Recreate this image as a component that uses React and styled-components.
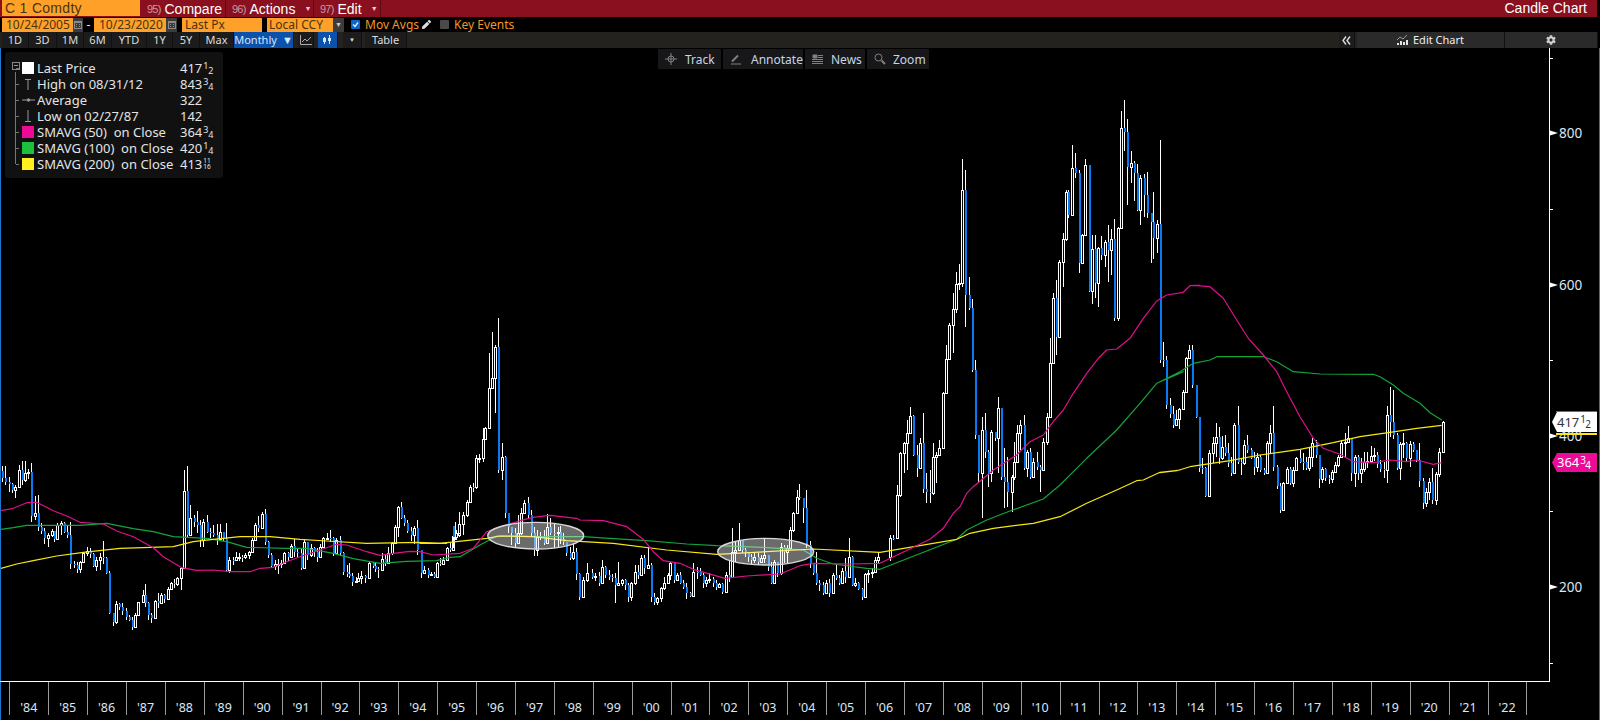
import React from "react";
import styled, { createGlobalStyle } from "styled-components";
import { FaCog, FaPen } from "react-icons/fa";

const Global = createGlobalStyle`
  html, body { margin: 0; padding: 0; background: #000; overflow: hidden; }
  #root { width: 1600px; height: 720px; }
`;

const FONT = `"Noto Sans", "Liberation Sans", sans-serif`;
const MENU_FONT = `"Liberation Sans", Arial, sans-serif`;

const Screen = styled.div`
  width: 1600px; height: 720px; background: #000; display: flex; flex-direction: column;
  font-family: ${FONT}; color: #e6e6e6; overflow: hidden;
`;

/* ---------- top bar ---------- */
const TopBar = styled.div`
  height: 17px; width: 1597px; background: #8a1020; display: flex; align-items: stretch; flex: none;
  font-family: ${MENU_FONT}; font-size: 14px; line-height: 16px;
`;
const Ticker = styled.div`
  width: 138px; margin-left: 2px; height: 16px; background: #ffa028; color: #4a3410;
  padding-left: 3px; box-sizing: border-box; letter-spacing: 0.3px;
`;
const MenuItem = styled.div`
  width: ${p => p.$w}px; box-sizing: border-box; border-right: 1px solid #5c0a15; padding-left: ${p => p.$pad}px;
  display: flex; align-items: center; gap: 4px; color: #fff; white-space: nowrap;
`;
const MenuNum = styled.span`color: #c79aa2; font-size: 11px; letter-spacing: -0.8px;`;
const Caret = styled.span`font-size: 7px; color: #e6d0d4; margin-left: 5px;`;
const Title = styled.div`margin-left: auto; padding-right: 10px; color: #fff;`;

/* ---------- controls ---------- */
const ControlRow = styled.div`
  height: 15px; display: flex; align-items: center; padding-left: 2px; flex: none; font-size: 12px;
`;
const Field = styled.div`
  width: ${p => p.$w}px; height: 14px; margin-left: ${p => p.$ml || 0}px; background: #ffa028; color: #4a3410;
  box-sizing: border-box; padding-left: ${p => p.$pad}px; line-height: 14px; white-space: nowrap; flex: none;
`;
const FieldButton = styled.div`
  width: ${p => p.$w}px; height: 14px; background: #3c3c3c; display: flex; align-items: center; justify-content: center; flex: none;
  color: #ccc; font-size: 7px;
`;
const Dash = styled.span`width: 11px; text-align: center; color: #eee; flex: none; line-height: 12px;`;
const Check = styled.div`
  width: 9px; height: 9px; margin-left: ${p => p.$ml}px; background: ${p => (p.$on ? "#0d66c8" : "#4a4a4a")}; flex: none;
  display: flex; align-items: center; justify-content: center; border-radius: 1px;
`;
const OrangeLabel = styled.span`margin-left: 5px; color: #f0962a; white-space: nowrap; flex: none;`;

/* ---------- range bar ---------- */
const RangeRow = styled.div`
  height: 16px; background: #23221e; display: flex; padding-left: 2px; width: 1598px; box-sizing: border-box; flex: none;
  font-size: 11px; color: #dcdcdc;
`;
const RangeBtn = styled.div`
  width: ${p => p.$w}px; margin-left: ${p => p.$ml || 0}px; background: ${p => (p.$on ? "#0b52ad" : "#1c1c1c")};
  color: ${p => (p.$on ? "#d6e6ff" : "#dcdcdc")}; border-right: 1px solid #111; box-sizing: border-box;
  display: flex; align-items: center; justify-content: center; gap: 5px; line-height: 14px; white-space: nowrap; flex: none;
`;
const EditBtn = styled(RangeBtn)`background: #2a2a2a; color: #eee;`;

/* ---------- chart ---------- */
const ChartArea = styled.div`
  position: relative; flex: 1; box-shadow: inset 1px 0 0 #1a78d0, inset -1px 0 0 #1a78d0;
`;
const ChartSvg = styled.svg`display: block; width: 1600px; height: 672px;`;

const FloatBar = styled.div`
  position: absolute; top: 1px; left: 658px; display: flex; gap: 2px; height: 20px;
`;
const FloatBtn = styled.div`
  width: ${p => p.$w}px; background: #17171a; color: #c4d6e8; font-size: 12px; display: flex; align-items: center;
  gap: ${p => p.$gap}px; padding-left: 7px; box-sizing: border-box;
`;

const Legend = styled.div`
  position: absolute; left: 5px; top: 4px; width: 218px; height: 126px; background: #111112; border-radius: 3px;
  padding: 8px 0 0 17px; box-sizing: border-box; font-size: 13px; color: #e4e4e4;
`;
const TreeLine = styled.div`
  position: absolute; left: 10px; top: 20px; width: 1px; height: 92px; background: #777;
`;
const TreeBox = styled.div`
  position: absolute; left: 7px; top: 10px; width: 6px; height: 6px; border: 1px solid #888;
  &::after { content: ""; position: absolute; left: 1px; top: 2px; width: 4px; height: 1px; background: #999; }
`;
const LegendRow = styled.div`
  height: 16px; display: grid; grid-template-columns: 15px 143px auto; align-items: center; line-height: 16px; white-space: nowrap;
  position: relative;
  &::before { content: ""; position: absolute; left: -6px; top: 8px; width: 3px; height: 1px; background: #777; }
`;
const LegendLabel = styled.span`white-space: pre;`;
const Swatch = styled.div`width: 12px; height: 12px; background: ${p => p.$c};`;
const Value = styled.span`display: inline-flex; align-items: flex-start;`;
const Frac = styled.span`
  display: inline-block; position: relative; flex: none; height: 14px;
  width: ${p => (p.$tiny ? 11 : p.$big ? 12 : 11)}px;
  font-size: ${p => (p.$tiny ? 6.5 : p.$big ? 10 : 9)}px; line-height: ${p => (p.$tiny ? 7 : 9)}px;
  & > i { position: absolute; font-style: normal; }
  & > i:first-child { left: 1px; top: ${p => (p.$big ? 3 : 1)}px; }
  & > i:last-child { left: ${p => (p.$tiny ? 1 : p.$big ? 6 : 6)}px; top: ${p => (p.$tiny ? 7 : p.$big ? 8 : 6)}px; }
`;
const Fraction = ({ n, d, big }) => <Frac $tiny={n.length > 1} $big={big}><i>{n}</i><i>{d}</i></Frac>;

const PriceTag = styled.div`
  position: absolute; left: 1552px; top: ${p => p.$top}px; width: 45px; height: ${p => p.$h}px; background: ${p => p.$bg}; color: ${p => p.$fg};
  clip-path: polygon(5px 0, 100% 0, 100% 100%, 5px 100%, 0 50%);
  font-size: 13px; line-height: ${p => p.$h}px; padding-left: 5px; box-sizing: border-box; display: flex;
`;
const TagStripe = styled.div`
  position: absolute; left: 1556px; top: ${p => p.$top}px; width: 41px; height: ${p => p.$h}px; background: ${p => p.$c};
`;

/* ---------- data: closes read from the chart, grouped by the crop origin ---------- */
const sec = (ox, oy, a) => a.map(([x, c, h, l]) => ({
  x: ox + x / 3, c: oy + c / 3, h: h != null ? oy + h / 3 : null, l: l != null ? oy + l / 3 : null,
}));

const A = [[5,115,78],[16,125,78,135],[26,132,110,155],[36,150,128,160],[46,142,135,175],[57,90,75,143],[66,120,63],[76,98,63,125],[85,95,88],[93,228,70,245],[105,220,168,240],[113,262,165],[122,272,250],[131,293,265],[145,285,278,320],[155,273,268,290],[163,297,272],[172,255,250,297],[183,250,243,285],[192,275,247],[201,285,255],[210,372,245],[222,375,362],[231,387,365,398],[240,365,362,398],[250,340,335,368],[260,332,322],[270,343,325],[279,377,340],[289,360,352,392],[300,350,340,390],[309,353,303],[318,400,350],[327,518,392],[338,547,518],[348,492,482,553],[357,500,490],[366,512,490],[377,530,505],[387,540,525],[396,560,530,570],[406,525,518,558],[415,487,485,528],[428,465,450,488],[435,488,432],[444,525,485],[453,535,520,548],[465,483,480,538],[475,490,460],[484,465,458,490],[493,477,462],[505,447,440,477],[514,430,425,450],[522,432,418],[530,415,410,437],[543,385,382,450],[553,152,90,387],[560,285,78],[570,235,195,280],[581,247,225],[590,255,212,280],[600,300,240,320],[610,245,238,320],[620,275,225],[630,278,265],[640,285,255],[650,297,252],[660,275,252,300],[668,298,280],[677,390,250],[688,360,352,398],[698,360,350,375],[708,352,335,362],[718,350,340,362],[727,352,345],[736,345,338,356],[746,335,332,356],[756,300,295,335],[765,255,250,302],[774,263,228],[785,222,215,265],[794,305,207],[803,345,303],[812,378,340],[825,373,360,390],[834,372,358,402],[843,370,360,385],[853,340,335,372],[864,350,335],[874,318,312,350],[882,335,298],[892,340,325],[903,383,328],[912,305,300,385],[920,345,305],[933,325,312,350],[942,335,320],[950,352,325],[960,320,312,355],[970,295,290,325],[982,293,280,300],[990,295,270],[999,340,290],[1008,300,295,342],[1019,340,288],[1028,395,335],[1040,403,375],[1048,407,368],[1056,427,400],[1068,423,410,428],[1075,415,400,423],[1084,408,392],[1095,415,405],[1108,370,365,415],[1118,378,365],[1125,387,370],[1135,390,380,413],[1147,357,340,385],[1155,370,345],[1165,340,322,372],[1175,310,305,345],[1185,260,255,312],[1195,200,198,290],[1203,235,185],[1212,248,225],[1222,272,240],[1232,285,262],[1242,265,258,312],[1250,330,240],[1262,400,330],[1273,390,378,402],[1283,405,385,415],[1293,403,395,408],[1303,412,395,415],[1312,370,365,410],[1320,372,355],[1330,360,352,372],[1342,325,320,360],[1350,330,310],[1358,288,278,328],[1366,285,245,300],[1376,258,245,290]];

const B = [[158,710,700,745],[168,700,690],[178,672,635,702],[190,645,635,705],[200,607,600,650],[210,560,555,608],[218,560,550],[229,475,465,568],[238,473,462],[248,418,385,485],[256,385,380,420],[268,265,160,388],[277,233,95,268],[286,140,135,340],[294,510,55],[306,472,430,540],[315,640,468],[324,680,645],[334,700,680,735],[344,728,685],[355,700,645,730],[364,640,625,705],[373,610,600,640],[384,645,590],[392,700,630],[402,750,680,768],[412,712,690,768],[421,715,695],[432,730,690],[442,680,642,732],[450,698,655],[462,700,668,745],[473,695,680,740],[480,718,678],[490,725,700],[497,760,725],[509,775,740],[519,757,730,780],[527,822,745],[537,890,820],[550,840,830,892],[560,820,790,845],[575,830,808],[585,828,818],[597,850,815],[607,800,780,850],[615,825,798],[628,830,810],[636,835,822],[645,855,820,910],[655,848,785,855],[667,840,838,858],[675,855,838],[684,890,850],[694,850,845,902],[705,815,795,855],[714,825,795],[723,775,765,825],[732,805,765],[745,795,745,808],[753,890,790],[762,905,880,915],[772,895,892,915],[783,865,860,905],[793,848,830,870],[803,825,820,850],[811,790,785,840],[822,840,785],[831,825,818,842],[840,850,815],[848,860,840],[857,878,850],[870,888,875,892],[880,815,790,892],[890,815,800,838],[899,825,805],[909,850,820],[918,840,830,862],[928,838,820,848],[938,848,830],[948,860,840],[958,852,848,860],[967,875,850],[977,825,815,878],[987,830,780,845],[997,755,685,835],[1006,750,725,785],[1016,720,668,752],[1026,750,720],[1035,760,745],[1044,770,755,785],[1052,780,762,792],[1062,772,760,788],[1075,785,760,795],[1082,775,765,790],[1092,765,715,790],[1103,800,765],[1113,850,785],[1123,785,780,850],[1132,820,785],[1142,740,730,825],[1152,755,735,790],[1162,745,735,790],[1170,690,680,750],[1180,640,635,695],[1190,590,570,640],[1198,595,552],[1208,625,595,670],[1217,735,570],[1230,790,722],[1240,820,795,825],[1248,850,757],[1257,855,840],[1268,878,845],[1278,850,840,878],[1288,878,838],[1298,825,820,870],[1308,835,795,840],[1318,850,825],[1327,812,805,852],[1336,830,775],[1347,770,715,830],[1356,855,768],[1365,850,835,860],[1375,868,845],[1385,890,865],[1395,822,820,892],[1405,818,810,850],[1415,815,805],[1425,780,770,820],[1435,772,755]];

const C = [[90,1195,1185],[100,1195,1185],[112,1065,1035,1198],[120,940,935,1070],[132,910,905,1000],[141,878,840,990],[150,828,800,880],[158,945,825],[170,985,915,1010],[181,910,895,985],[188,1047,820],[199,1055,1000,1090],[209,1060,990,1090],[219,950,910,1065],[228,945,935,1030],[238,925,900,945],[249,760,755,925],[259,658,615,762],[268,555,550,655],[278,508,460,640],[288,432,395,518],[297,430,372],[307,150,58,440],[315,465,90,560],[326,505,410],[336,690,478],[345,885,660],[354,1000,885,1025],[367,870,832,1135],[375,935,820],[384,1000,930,1040],[394,875,870,1025],[404,895,880],[414,803,770,1000],[422,1010,805],[431,1025,925,1105],[440,1055,950,1100],[455,1010,1005,1115],[463,965,905,1020],[472,880,855,965],[481,855,840,930],[491,985,825],[502,935,930,1010],[510,1012,925],[520,965,955,1012],[530,980,935],[540,990,975,1055],[550,905,895,992],[560,830,820,915],[570,670,595,762],[578,475,460,672],[587,590,420,645],[597,365,360,592],[608,298,280,442],[618,155,150,302],[625,225,150],[635,85,15,170],[646,100,38],[656,368,90,398],[667,285,282,368],[676,75,58,280],[686,452,78],[696,328,285,492],[704,430,285,475],[715,325,320,500],[724,345,288],[736,305,300,382],[744,330,255,425],[754,298,268,405],[762,535,238],[774,265,262,542]];

const D = [[364,115,63,400],[372,125,30,182],[381,230,88,345],[393,218,183,280],[402,248,212,332],[410,360,222],[421,265,255,405],[431,315,252,382],[440,368,246],[452,395,372,520],[458,443,306,508],[472,403,390,490]];

const E = [[900,660,0],[908,660,605,682],[918,795,648],[929,822,775],[938,855,798],[948,838,810,858],[958,808,804,868],[969,755,750,810],[978,655,650,755],[987,630,615,655],[996,735,615],[1008,830,735],[1017,985,830]];

const F = [[126,595,565,612],[135,678,590],[148,550,540,680],[158,520,500,580],[167,502,458,560],[176,565,472],[187,530,498,570],[196,550,495],[205,578,520],[213,608,560],[223,465,460,612],[234,575,408],[242,580,565,615],[251,525,510,585],[261,540,495],[272,565,535],[282,590,545,615],[291,560,550,605],[300,600,555],[311,610,595,615],[320,520,512,612],[329,488,465,550],[338,590,408],[350,648,585],[360,720,640],[370,640,635,720],[380,597,590,640],[390,640,590],[400,600,590,650],[409,565,560,602],[420,575,540],[430,575,550,600],[438,595,560],[447,560,535,602],[457,520,505,590],[468,555,510],[476,628,560,655],[487,597,590,640],[495,625,595],[506,628,615,642],[516,605,600,640],[526,585,575,610],[534,562,555,590],[544,520,510,565],[555,515,490,565],[565,505,468,520],[573,610,505,632],[584,560,555,652],[594,608,555,630],[604,598,565,640],[612,575,545,605],[622,572,545,595],[632,558,528,565],[642,555,535],[651,582,545],[661,597,570],[672,600,575,625],[682,435,408,640],[690,455,350,500],[700,495,360],[711,595,490,600],[721,522,515,630],[730,520,490,565],[739,565,515],[750,522,512,590],[760,540,515],[768,570,540],[777,632,520,650],[788,698,625,718],[799,665,655,710],[808,637,625,690],[815,690,595],[829,612,605,705],[838,545,535,620],[848,457,452,545]];

const candles = [
  ...sec(0, 440, A), ...sec(400, 300, B), ...sec(860, 140, C), ...sec(1000, 90, D),
  ...sec(860, 140, E), ...sec(1160, 270, F),
];

const pts = (ox, oy, a) => a.map(([x, y]) => [ox + x / 3, oy + y / 3]);
const toPath = a => a.map(([x, y]) => `${x.toFixed(1)},${y.toFixed(1)}`).join(" ");

const pink = toPath([
  ...pts(0, 440, [[3,212],[40,205],[80,188],[110,187],[160,212],[200,228],[240,247],[310,252],[350,273],[400,290],[460,323],[490,350],[545,383],[590,391],[640,390],[690,395],[750,395],[780,385],[820,382],[860,365],[900,350],[960,330],[1010,313],[1040,315],[1100,335],[1140,346],[1180,340],[1230,334],[1260,335],[1300,345],[1380,340]]),
  ...pts(400, 300, [[180,760],[220,745],[260,695],[300,680],[360,662],[400,652],[450,646],[530,655],[540,660],[610,662],[680,680],[730,718],[760,755],[790,782],[840,790],[880,808],[975,835],[1040,828],[1140,822],[1200,797],[1240,790],[1350,792],[1440,790]]),
  ...pts(860, 140, [[210,1198],[250,1165],[280,1120],[300,1100],[320,1060],[340,1040],[400,990],[470,945],[510,905],[550,885],[580,845],[610,810],[640,760],[680,700],[715,655],[740,630],[770,627],[810,595],[850,535],[890,483],[920,465],[970,457],[990,437],[1020,436]]),
  ...pts(1160, 270, [[100,46],[150,50],[190,85],[230,150],[265,205],[310,255],[350,305],[380,365],[420,440],[460,505],[490,535],[540,553],[580,575],[640,578],[690,570],[740,575],[770,570],[820,583],[845,578]]),
]);
const green = toPath([
  ...pts(0, 440, [[3,268],[40,263],[80,256],[240,256],[320,250],[400,266],[460,275],[520,290],[620,295],[680,305],[740,322],[860,325],[920,325],[1000,340],[1060,356],[1140,370],[1220,364],[1310,362],[1350,352]]),
  ...pts(400, 300, [[180,770],[240,735],[290,708],[400,710],[550,710],[640,716],[740,722],[860,732],[950,737],[1090,742],[1210,750],[1250,775],[1300,792],[1400,805],[1440,808]]),
  ...pts(860, 140, [[290,1198],[320,1170],[380,1140],[450,1113],[550,1077],[600,1035],[680,955],[770,870],[840,790],[890,730],[970,695]]),
  ...pts(1160, 270, [[0,335],[60,305],[100,280],[150,270],[170,260],[310,260],[350,275],[400,305],[480,312],[640,313],[660,320],[700,345],[730,370],[780,400],[810,428],[845,450]]),
]);
const yellow = toPath([
  ...pts(0, 440, [[3,385],[50,372],[100,362],[170,348],[250,337],[360,325],[520,320],[580,305],[640,298],[720,290],[810,290],[900,298],[980,303],[1100,310],[1250,307],[1340,310]]),
  ...pts(400, 300, [[60,730],[120,730],[260,715],[300,708],[400,710],[500,722],[640,730],[800,750],[950,763],[1100,755],[1240,747],[1440,757]]),
  ...pts(860, 140, [[290,1198],[330,1180],[400,1165],[520,1150],[600,1130],[680,1090],[770,1050],[830,1022],[850,1020],[900,997],[960,990]]),
  ...pts(1160, 270, [[0,608],[50,602],[90,590],[210,572],[300,555],[420,538],[520,518],[600,500],[690,487],[770,475],[845,466]]),
]);

const rnd = i => { const s = Math.sin(i * 12.9898) * 43758.5453; return s - Math.floor(s); };

const Candles = () => {
  let prev = candles[0].c - 7;
  return candles.map((d, i) => {
    const x = Math.round(d.x);
    const open = prev; prev = d.c;
    const top = Math.round(Math.min(open, d.c));
    const bot = Math.max(top + 1, Math.round(Math.max(open, d.c)));
    const up = d.c < open;
    const hi = d.h != null ? d.h : top - 1 - rnd(i) * 5;
    const lo = d.l != null ? d.l : bot + 1 + rnd(i + 500) * 5;
    return (
      <g key={i}>
        <rect x={x} y={Math.round(hi)} width="1" height={Math.max(0, Math.round(lo) - Math.round(hi))} fill="#fff" />
        {up
          ? <rect x={x - 0.5} y={top + 0.5} width="2" height={bot - top} fill="#000" stroke="#fff" strokeWidth="1" />
          : <rect x={x} y={top} width="2" height={bot - top} fill="#0a7af2" />}
      </g>
    );
  });
};

const YEARS = ["84","85","86","87","88","89","90","91","92","93","94","95","96","97","98","99","00","01","02","03","04","05","06","07","08","09","10","11","12","13","14","15","16","17","18","19","20","21","22"];

const Chart = () => (
  <ChartSvg viewBox="0 48 1600 672" shapeRendering="crispEdges">
    <Candles />
    <g fill="none" shapeRendering="auto" strokeLinejoin="round">
      <polyline points={green} stroke="#12a53a" strokeWidth="1.2" />
      <polyline points={yellow} stroke="#f8e812" strokeWidth="1.2" />
      <polyline points={pink} stroke="#e0108c" strokeWidth="1.2" />
      <ellipse cx="535.7" cy="535.7" rx="48" ry="13.3" fill="#fff" fillOpacity="0.42" stroke="#d8d8d8" strokeWidth="1.4" />
      <ellipse cx="765.7" cy="551.7" rx="48" ry="13.3" fill="#fff" fillOpacity="0.42" stroke="#d8d8d8" strokeWidth="1.4" />
    </g>

    <rect x="1549" y="48" width="1" height="634" fill="#fff" />
    <rect x="0" y="681" width="1550" height="1" fill="#fff" />
    {[58, 209, 360, 511, 663].map(y => <rect key={y} x="1550" y={y} width="3" height="1" fill="#fff" />)}
    {[[133, "800"], [285, "600"], [436, "400"], [587, "200"]].map(([y, t]) => (
      <g key={t}>
        <polygon points={`1550,${y - 2.5} 1558,${y} 1550,${y + 2.5}`} fill="#fff" shapeRendering="auto" />
        <text x="1559" y={y + 5} fill="#dbe6f5" fontSize="13.5" fontFamily={FONT} shapeRendering="auto">{t}</text>
      </g>
    ))}

    {Array.from({ length: 40 }, (_, i) => 9.3 + 38.9 * i).map(x => (
      <rect key={x} x={Math.round(x)} y="682" width="1" height="33" fill="#9a9a9a" />
    ))}
    {YEARS.map((y, i) => (
      <text key={y} x={28.8 + 38.9 * i} y="712" textAnchor="middle" fill="#dbe6f5" fontSize="12.5" fontFamily={FONT} shapeRendering="auto">'{y}</text>
    ))}
  </ChartSvg>
);

const CalIcon = () => (
  <svg width="8" height="9" viewBox="0 0 8 9"><path d="M0 1h8v8H0z" fill="#8a8a8a" /><path d="M1 3h6v5H1z" fill="#3c3c3c" /><path d="M2 4h1v1H2zM5 4h1v1H5zM2 6h1v1H2zM5 6h1v1H5z" fill="#8a8a8a" /></svg>
);
const Tick = () => (
  <svg width="7" height="7" viewBox="0 0 7 7"><path d="M1 3.5l2 2 3-4" fill="none" stroke="#e8f0ff" strokeWidth="1.3" /></svg>
);
const LineIcon = () => (
  <svg width="12" height="10" viewBox="0 0 12 10" fill="none" stroke="#aaa"><path d="M.5 0v9.5H12" /><path d="M2 7l3-3 2 2 4-4" /></svg>
);
const CandleIcon = () => (
  <svg width="9" height="10" viewBox="0 0 9 10" fill="#d8e6ff"><path d="M1 2h1v1h1v4H2v2H1V7H0V3h1zM6 0h1v3h1v3H7v3H6V6H5V3h1z" /></svg>
);
const ChartIcon = () => (
  <svg width="11" height="10" viewBox="0 0 11 10" fill="#e6e6e6"><path d="M0 8h2v2H0zM3 6h2v4H3zM6 7h2v3H6zM9 5h2v5H9z" /><path d="M0 5l3-3 3 2 4-4" fill="none" stroke="#999" /></svg>
);
const TrackIcon = () => (
  <svg width="12" height="12" viewBox="0 0 12 12" fill="none" stroke="#808080"><circle cx="6" cy="6" r="3" /><path d="M6 0v12M0 6h12" /></svg>
);
const PenIcon = () => (
  <svg width="12" height="12" viewBox="0 0 12 12" fill="none" stroke="#808080"><path d="M1 11h10" /><path d="M2 8.5L8 2.5" strokeWidth="2" /></svg>
);
const NewsIcon = () => (
  <svg width="11" height="11" viewBox="0 0 11 11" fill="none" stroke="#808080"><path d="M1 1h4v3H1z" fill="#808080" /><path d="M6 1.5h5M6 3.5h5M0 5.5h11M0 7.5h11M0 9.5h11" /></svg>
);
const ZoomIcon = () => (
  <svg width="12" height="12" viewBox="0 0 12 12" fill="none" stroke="#808080"><circle cx="4.5" cy="4.5" r="3.5" /><path d="M7.5 7.5L11 11" strokeWidth="2" /></svg>
);
const HighIcon = () => (
  <svg width="12" height="12" viewBox="0 0 12 12" stroke="#999"><path d="M3 1.5h6M6 1.5V12" /></svg>
);
const LowIcon = () => (
  <svg width="12" height="12" viewBox="0 0 12 12" stroke="#999"><path d="M3 11.5h6M6 11.5V0" /></svg>
);
const AvgIcon = () => (
  <svg width="14" height="12" viewBox="0 0 14 12" stroke="#999" fill="#999"><path d="M0 6h13" /><circle cx="6.5" cy="6" r="1.3" /></svg>
);
const DoubleLeft = () => (
  <svg width="9" height="9" viewBox="0 0 9 9" fill="none" stroke="#ddd" strokeWidth="1.4"><path d="M4 .5L1 4.5l3 4M8 .5L5 4.5l3 4" /></svg>
);

const RANGES = [["1D", 27], ["3D", 28], ["1M", 27], ["6M", 28], ["YTD", 35], ["1Y", 26], ["5Y", 27], ["Max", 34]];

const LEGEND = [
  { icon: <Swatch $c="#fff" />, label: "Last Price", val: "417", f: ["1", "2"] },
  { icon: <HighIcon />, label: "High on 08/31/12", val: "843", f: ["3", "4"] },
  { icon: <AvgIcon />, label: "Average", val: "322" },
  { icon: <LowIcon />, label: "Low on 02/27/87", val: "142" },
  { icon: <Swatch $c="#ec0a96" />, label: "SMAVG (50)  on Close", val: "364", f: ["3", "4"] },
  { icon: <Swatch $c="#1cc03c" />, label: "SMAVG (100)  on Close", val: "420", f: ["1", "4"] },
  { icon: <Swatch $c="#fff01e" />, label: "SMAVG (200)  on Close", val: "413", f: ["11", "16"] },
];

export default function App() {
  return (
    <Screen>
      <Global />
      <TopBar>
        <Ticker>C 1 Comdty</Ticker>
        <MenuItem $w={86} $pad={7}><MenuNum>95)</MenuNum>Compare</MenuItem>
        <MenuItem $w={88} $pad={6}><MenuNum>96)</MenuNum>Actions<Caret>▼</Caret></MenuItem>
        <MenuItem $w={67} $pad={6}><MenuNum>97)</MenuNum>Edit<Caret>▼</Caret></MenuItem>
        <Title>Candle Chart</Title>
      </TopBar>

      <ControlRow>
        <Field $w={71} $pad={4}>10/24/2005</Field>
        <FieldButton $w={10}><CalIcon /></FieldButton>
        <Dash>-</Dash>
        <Field $w={72} $pad={5}>10/23/2020</Field>
        <FieldButton $w={11}><CalIcon /></FieldButton>
        <Field $w={80} $ml={5} $pad={3}>Last Px</Field>
        <Field $w={66} $ml={5} $pad={2}>Local CCY</Field>
        <FieldButton $w={11}>▼</FieldButton>
        <Check $on $ml={7}><Tick /></Check>
        <OrangeLabel>Mov Avgs</OrangeLabel>
        <FaPen size={9} color="#ddd" style={{ marginLeft: 3, flex: "none" }} />
        <Check $ml={9} />
        <OrangeLabel>Key Events</OrangeLabel>
      </ControlRow>

      <RangeRow>
        {RANGES.map(([t, w]) => <RangeBtn key={t} $w={w}>{t}</RangeBtn>)}
        <RangeBtn $w={60} $on>Monthly <span>▼</span></RangeBtn>
        <RangeBtn $w={16} $ml={4}><LineIcon /></RangeBtn>
        <RangeBtn $w={20} $ml={4} $on><CandleIcon /></RangeBtn>
        <RangeBtn $w={19} $ml={5} style={{ fontSize: 6 }}>▼</RangeBtn>
        <RangeBtn $w={42} $ml={3}>Table</RangeBtn>
        <RangeBtn $w={16} $ml={932}><DoubleLeft /></RangeBtn>
        <EditBtn $w={148} $ml={2}><ChartIcon />Edit Chart</EditBtn>
        <EditBtn $w={93}><FaCog size={10} color="#ccc" /></EditBtn>
      </RangeRow>

      <ChartArea>
        <Chart />
        <FloatBar>
          <FloatBtn $w={63} $gap={8}><TrackIcon />Track</FloatBtn>
          <FloatBtn $w={80} $gap={9}><PenIcon />Annotate</FloatBtn>
          <FloatBtn $w={60} $gap={8}><NewsIcon />News</FloatBtn>
          <FloatBtn $w={62} $gap={7}><ZoomIcon />Zoom</FloatBtn>
        </FloatBar>
        <Legend>
          <TreeBox />
          <TreeLine />
          {LEGEND.map(r => (
            <LegendRow key={r.label}>
              {r.icon}
              <LegendLabel>{r.label}</LegendLabel>
              <Value>{r.val}{r.f && <Fraction n={r.f[0]} d={r.f[1]} />}</Value>
            </LegendRow>
          ))}
        </Legend>
        <TagStripe $top={363} $h={1} $c="#12a53a" />
        <TagStripe $top={385} $h={2} $c="#ffe81a" />
        <PriceTag $top={364} $h={20} $bg="#fff" $fg="#333"><Value>417<Fraction n="1" d="2" big /></Value></PriceTag>
        <PriceTag $top={405} $h={19} $bg="#ec0a96" $fg="#fff"><Value>364<Fraction n="3" d="4" big /></Value></PriceTag>
      </ChartArea>
    </Screen>
  );
}
